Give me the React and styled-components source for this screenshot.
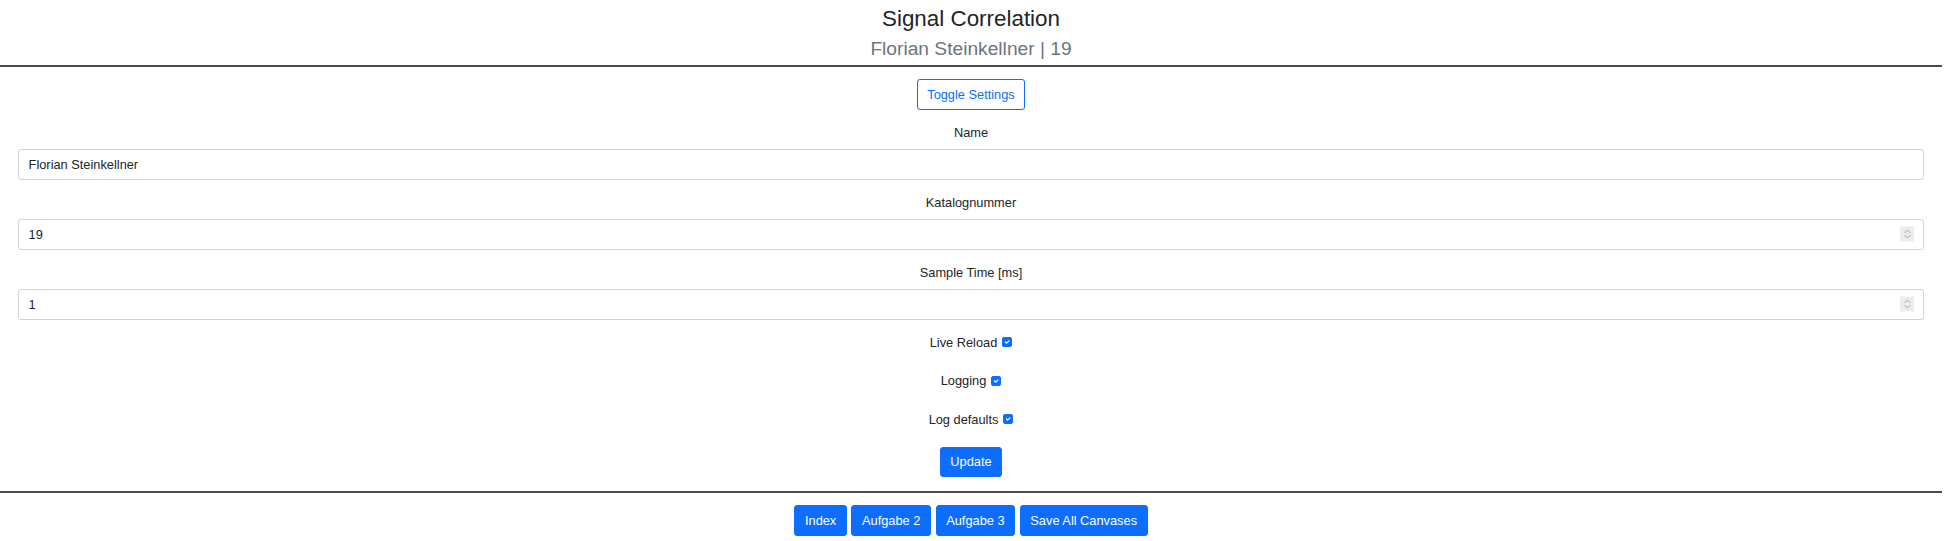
import React, { useState } from "react";
import styled, { createGlobalStyle } from "styled-components";

const GlobalStyle = createGlobalStyle`
  * { box-sizing: border-box; }
  body {
    margin: 0;
    background: #fff;
    color: #212529;
    font-family: "Liberation Sans", Arial, sans-serif;
    font-size: 12.8px;
    line-height: 1.5;
  }
`;

const Page = styled.div`
  width: calc(100% - 10px);
`;

const Header = styled.header`
  text-align: center;
  padding-top: 6px;
`;

const Title = styled.h3`
  margin: 0 0 4px;
  font-size: 22.4px;
  font-weight: 400;
  line-height: 1.2;
`;

const Subtitle = styled.h4`
  margin: 0;
  font-size: 19.2px;
  font-weight: 400;
  line-height: 1.2;
  color: #6c757d;
`;

const Divider = styled.hr`
  margin: ${(p) => p.$top}px 0 ${(p) => p.$bottom}px;
  border: 0;
  border-top: 2px solid #4a4a4a;
  opacity: 1;
`;

const Settings = styled.form`
  padding: 0 18px;
  text-align: center;
`;

const Button = styled.button`
  display: inline-block;
  padding: 4.8px 9.6px;
  font-family: inherit;
  font-size: 12.8px;
  line-height: 19.2px;
  border-radius: 3px;
  border: 1px solid #0d6efd;
  cursor: pointer;
  color: ${(p) => (p.$outline ? "#0d6efd" : "#fff")};
  background: ${(p) => (p.$outline ? "transparent" : "#0d6efd")};
`;

const ToggleRow = styled.div`
  margin-bottom: 13px;
`;

const FieldGroup = styled.div`
  margin-bottom: 13px;
`;

const Label = styled.label`
  display: block;
  margin-bottom: 7px;
  line-height: 19.2px;
`;

const InputWrap = styled.div`
  position: relative;
`;

const Input = styled.input`
  display: block;
  width: 100%;
  padding: 4.8px 9.6px;
  font-family: inherit;
  font-size: 12.8px;
  line-height: 19.2px;
  color: #212529;
  background: #fff;
  border: 1px solid #ced4da;
  border-radius: 3px;
  outline: none;
  -moz-appearance: textfield;

  &::-webkit-inner-spin-button,
  &::-webkit-outer-spin-button {
    -webkit-appearance: none;
    margin: 0;
  }
`;

const Spinner = styled.span`
  position: absolute;
  right: 10px;
  top: 50%;
  transform: translateY(-50%);
  width: 14px;
  height: 15px;
  display: flex;
  flex-direction: column;
  align-items: center;
  justify-content: center;
  gap: 1px;
  background: #ececec;
  cursor: default;
`;

const SpinArrow = styled.svg`
  display: block;
  width: 7px;
  height: 4px;
`;

const CheckList = styled.div`
  display: flex;
  flex-direction: column;
  align-items: center;
  gap: 19.3px;
  margin: 1px 0 17.7px;
`;

const CheckRow = styled.label`
  display: flex;
  align-items: center;
  gap: 5px;
  height: 19.2px;
  cursor: pointer;
`;

const Box = styled.span`
  display: inline-flex;
  align-items: center;
  justify-content: center;
  width: 10px;
  height: 10px;
  border-radius: 2px;
  border: 1px solid ${(p) => (p.$checked ? "#0d6efd" : "#bfc5cc")};
  background: ${(p) => (p.$checked ? "#0d6efd" : "#fff")};
`;

const Nav = styled.nav`
  display: flex;
  justify-content: center;
  gap: 4.6px;
`;

function Check({ label, checked, onToggle }) {
  return (
    <CheckRow onClick={onToggle}>
      {label}
      <Box $checked={checked}>
        {checked && (
          <svg viewBox="0 0 20 20" width="10" height="10">
            <path
              d="m6 10 3 3 6-6"
              fill="none"
              stroke="#fff"
              strokeWidth="3"
              strokeLinecap="round"
              strokeLinejoin="round"
            />
          </svg>
        )}
      </Box>
    </CheckRow>
  );
}

function NumberField({ id, value, onChange }) {
  const step = (d) => onChange(String((Number(value) || 0) + d));
  return (
    <InputWrap>
      <Input id={id} type="number" value={value} onChange={(e) => onChange(e.target.value)} />
      <Spinner>
        <SpinArrow viewBox="0 0 7 4" onClick={() => step(1)}>
          <path d="M0.5 3.5 3.5 0.5 6.5 3.5" fill="none" stroke="#a3a3a3" strokeWidth="1" />
        </SpinArrow>
        <SpinArrow viewBox="0 0 7 4" onClick={() => step(-1)}>
          <path d="M0.5 0.5 3.5 3.5 6.5 0.5" fill="none" stroke="#a3a3a3" strokeWidth="1" />
        </SpinArrow>
      </Spinner>
    </InputWrap>
  );
}

export default function App() {
  const [name, setName] = useState("Florian Steinkellner");
  const [catalog, setCatalog] = useState("19");
  const [sample, setSample] = useState("1");
  const [flags, setFlags] = useState({ live: true, logging: true, defaults: true });

  const toggle = (key) => setFlags((f) => ({ ...f, [key]: !f[key] }));

  return (
    <Page>
      <GlobalStyle />
      <Header>
        <Title>Signal Correlation</Title>
        <Subtitle>
          {name} | {catalog}
        </Subtitle>
      </Header>
      <Divider $top={5} $bottom={12} />
      <Settings onSubmit={(e) => e.preventDefault()}>
        <ToggleRow>
          <Button type="button" $outline>
            Toggle Settings
          </Button>
        </ToggleRow>
        <FieldGroup>
          <Label htmlFor="name">Name</Label>
          <Input id="name" value={name} onChange={(e) => setName(e.target.value)} />
        </FieldGroup>
        <FieldGroup>
          <Label htmlFor="catalog">Katalognummer</Label>
          <NumberField id="catalog" value={catalog} onChange={setCatalog} />
        </FieldGroup>
        <FieldGroup>
          <Label htmlFor="sample">Sample Time [ms]</Label>
          <NumberField id="sample" value={sample} onChange={setSample} />
        </FieldGroup>
        <CheckList>
          <Check label="Live Reload" checked={flags.live} onToggle={() => toggle("live")} />
          <Check label="Logging" checked={flags.logging} onToggle={() => toggle("logging")} />
          <Check label="Log defaults" checked={flags.defaults} onToggle={() => toggle("defaults")} />
        </CheckList>
        <Button type="submit">Update</Button>
      </Settings>
      <Divider $top={14} $bottom={12} />
      <Nav>
        <Button type="button">Index</Button>
        <Button type="button">Aufgabe 2</Button>
        <Button type="button">Aufgabe 3</Button>
        <Button type="button">Save All Canvases</Button>
      </Nav>
    </Page>
  );
}
